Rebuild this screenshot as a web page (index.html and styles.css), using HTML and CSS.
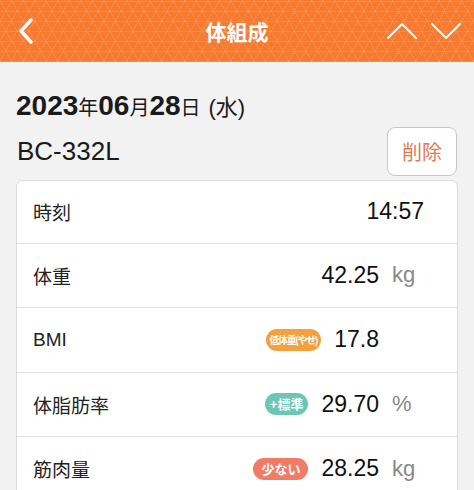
FILE: index.html
```html
<!DOCTYPE html>
<html>
<head>
    <meta charset="UTF-8">
    <title>体組成</title>
    <link rel="stylesheet" href="styles.css">
</head>
<body>
<header class="topbar">
    <div class="topbar-left">
        <svg class="icon-back" width="20" height="30" viewBox="0 0 20 30">
            <polyline points="15,4 5,15 15,26" fill="none" stroke="#fff" stroke-width="3.5" stroke-linecap="round" stroke-linejoin="round"/>
        </svg>
    </div>
    <h1 class="topbar-title">体組成</h1>
    <div class="topbar-right">
        <svg width="32" height="20" viewBox="0 0 32 20">
            <polyline points="2,17 16,3 30,17" fill="none" stroke="#fff" stroke-width="2" stroke-linecap="round" stroke-linejoin="round"/>
        </svg>
        <svg width="32" height="20" viewBox="0 0 32 20">
            <polyline points="2,3 16,17 30,3" fill="none" stroke="#fff" stroke-width="2" stroke-linecap="round" stroke-linejoin="round"/>
        </svg>
    </div>
</header>

<main class="content">
    <div class="date">
        <b>2023</b><span class="date-unit">年</span><b>06</b><span class="date-unit">月</span><b>28</b><span class="date-unit">日</span> <span class="date-week">(水)</span>
    </div>

    <div class="device-row">
        <span class="device">BC-332L</span>
        <button class="btn-delete">削除</button>
    </div>

    <section class="card">
        <div class="row row-first">
            <span class="row-label">時刻</span>
            <span class="row-value">14:57</span>
        </div>
        <div class="row">
            <span class="row-label">体重</span>
            <span class="row-value">42.25</span>
            <span class="row-unit">kg</span>
        </div>
        <div class="row">
            <span class="row-label">BMI</span>
            <span class="badge badge-low">低体重(やせ)</span>
            <span class="row-value">17.8</span>
            <span class="row-unit"></span>
        </div>
        <div class="row">
            <span class="row-label">体脂肪率</span>
            <span class="badge badge-normal">+標準</span>
            <span class="row-value">29.70</span>
            <span class="row-unit">%</span>
        </div>
        <div class="row">
            <span class="row-label">筋肉量</span>
            <span class="badge badge-few">少ない</span>
            <span class="row-value">28.25</span>
            <span class="row-unit">kg</span>
        </div>
    </section>
</main>
</body>
</html>
```

FILE: styles.css
```css
body {
    margin: 0;
    font-family: "Liberation Sans", "Noto Sans CJK JP", sans-serif;
    background-color: #f2f2f2;
    color: #1a1a1a;
    overflow: hidden;
}

/* ヘッダー */
.topbar {
    height: 62px;
    display: grid;
    grid-template-columns: 1fr auto 1fr;
    align-items: center;
    background-color: #f67b30;
    background-image:
        repeating-linear-gradient(0deg, rgba(255, 255, 255, 0.10) 0 1px, transparent 1px 10px),
        repeating-linear-gradient(60deg, rgba(255, 255, 255, 0.10) 0 1px, transparent 1px 10px),
        repeating-linear-gradient(120deg, rgba(255, 255, 255, 0.10) 0 1px, transparent 1px 10px);
}

.topbar-left {
    padding-left: 16px;
    display: flex;
    align-items: center;
}

.topbar-title {
    margin: 0;
    color: #fff;
    font-size: 21px;
    font-weight: bold;
    font-family: "Noto Sans CJK JP", sans-serif;
}

.topbar-right {
    display: flex;
    justify-content: flex-end;
    align-items: center;
    gap: 12px;
    padding-right: 12px;
}

/* 日付 */
.content {
    padding: 0 16px;
}

.date {
    padding-top: 27px;
    font-size: 28px;
    line-height: 34px;
    color: #1a1a1a;
}

.date-unit {
    font-family: "Noto Sans CJK JP", sans-serif;
    font-size: 20px;
}

.date-week {
    font-size: 22px;
}

.device-row {
    display: flex;
    justify-content: space-between;
    align-items: center;
    margin-top: 2px;
}

.device {
    font-size: 26px;
    padding-left: 1px;
}

.btn-delete {
    width: 70px;
    height: 49px;
    background-color: #fff;
    border: 1.5px solid #c8c8c8;
    border-radius: 8px;
    color: #e07a52;
    font-family: "Noto Sans CJK JP", sans-serif;
    font-size: 20px;
    padding: 0;
    margin-right: 1px;
}

/* カード */
.card {
    margin-top: 4px;
    background-color: #fff;
    border: 1px solid #dcdcdc;
    border-radius: 7px;
}

.row {
    display: flex;
    align-items: center;
    height: 63.5px;
    border-bottom: 1.5px solid #e2e2e2;
    padding: 0 33px 0 16px;
}

.row-first {
    height: 61.5px;
}

.row-label {
    flex: 1;
    font-family: "Liberation Sans", "Noto Sans CJK JP", sans-serif;
    font-size: 19px;
    color: #222;
}

.row-value {
    font-size: 23px;
    color: #111;
}

.row-unit {
    width: 32px;
    padding-left: 13px;
    font-size: 22px;
    color: #888;
}

.badge {
    margin-right: 13px;
    height: 22px;
    line-height: 22px;
    border-radius: 11px;
    padding: 0 8px;
    color: #fff;
    font-weight: bold;
    font-size: 13px;
    font-family: "Noto Sans CJK JP", sans-serif;
}

.badge-low {
    background-color: #f3a13e;
    font-size: 10px;
    letter-spacing: -1.4px;
    padding: 0 4px 0 3px;
}

.badge-normal {
    background-color: #6cc5b5;
    padding: 0 5px;
}

.badge-few {
    background-color: #f27b68;
}
```
